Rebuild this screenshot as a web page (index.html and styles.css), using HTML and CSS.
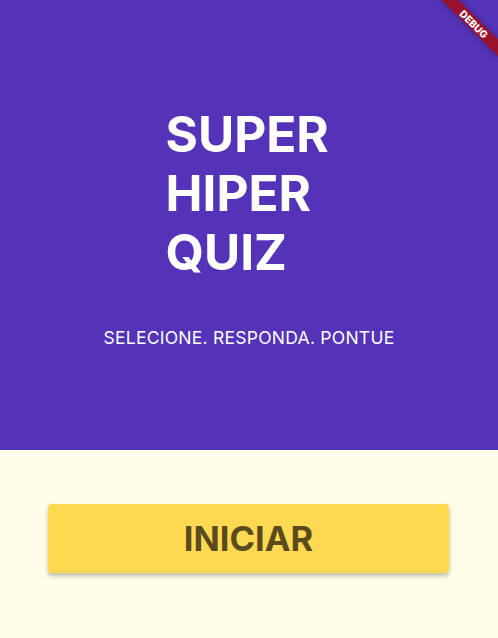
FILE: index.html
```html
<!DOCTYPE html>
<html lang="pt">
<head>
<meta charset="utf-8">
<title>Super Hiper Quiz</title>
<link rel="stylesheet" href="styles.css">
</head>
<body>
<div class="app">
  <header class="hero">
    <h1 class="title">SUPER<br>HIPER<br>QUIZ</h1>
    <p class="tagline">SELECIONE. RESPONDA. PONTUE</p>
  </header>
  <main class="actions">
    <button class="start">INICIAR</button>
  </main>
  <div class="debug-banner">DEBUG</div>
</div>
</body>
</html>
```
FILE: styles.css
```css
* { box-sizing: border-box; }
html, body { margin: 0; padding: 0; }
body {
  font-family: Inter, "Noto Sans", sans-serif;
  background: #FFFDE7;
}
.app {
  position: relative;
  width: 498px;
  height: 638px;
  overflow: hidden;
  display: flex;
  flex-direction: column;
}
.hero {
  height: 450px;
  background: #5433B8;
  display: flex;
  flex-direction: column;
  align-items: center;
  padding-top: 105px;
}
.title {
  margin: 0;
  font-size: 49.5px;
  font-weight: 700;
  line-height: 59px;
  color: #fff;
  text-align: left;
  width: 167px;
}
.tagline {
  margin: 45px 0 0;
  font-size: 17.5px;
  font-weight: 400;
  color: #fff;
  letter-spacing: 0.25px;
}
.actions {
  flex: 1;
  padding: 54px 48px 0 48px;
}
.start {
  display: block;
  width: 401px;
  height: 69px;
  border: none;
  border-radius: 4px;
  background: #FFD952;
  color: #5A4A1C;
  font-family: Inter, "Noto Sans", sans-serif;
  font-size: 34.5px;
  font-weight: 700;
  box-shadow: 0 3px 4px rgba(0,0,0,0.25);
  cursor: pointer;
}
.debug-banner {
  position: absolute;
  left: 434px;
  top: 18px;
  width: 80px;
  height: 12px;
  transform: rotate(45deg);
  background: rgba(170, 10, 10, 0.8);
  color: #fff;
  font-size: 10px;
  font-weight: 800;
  line-height: 12px;
  text-align: center;
  box-shadow: 0 0 6px rgba(0,0,0,0.3);
}
```
